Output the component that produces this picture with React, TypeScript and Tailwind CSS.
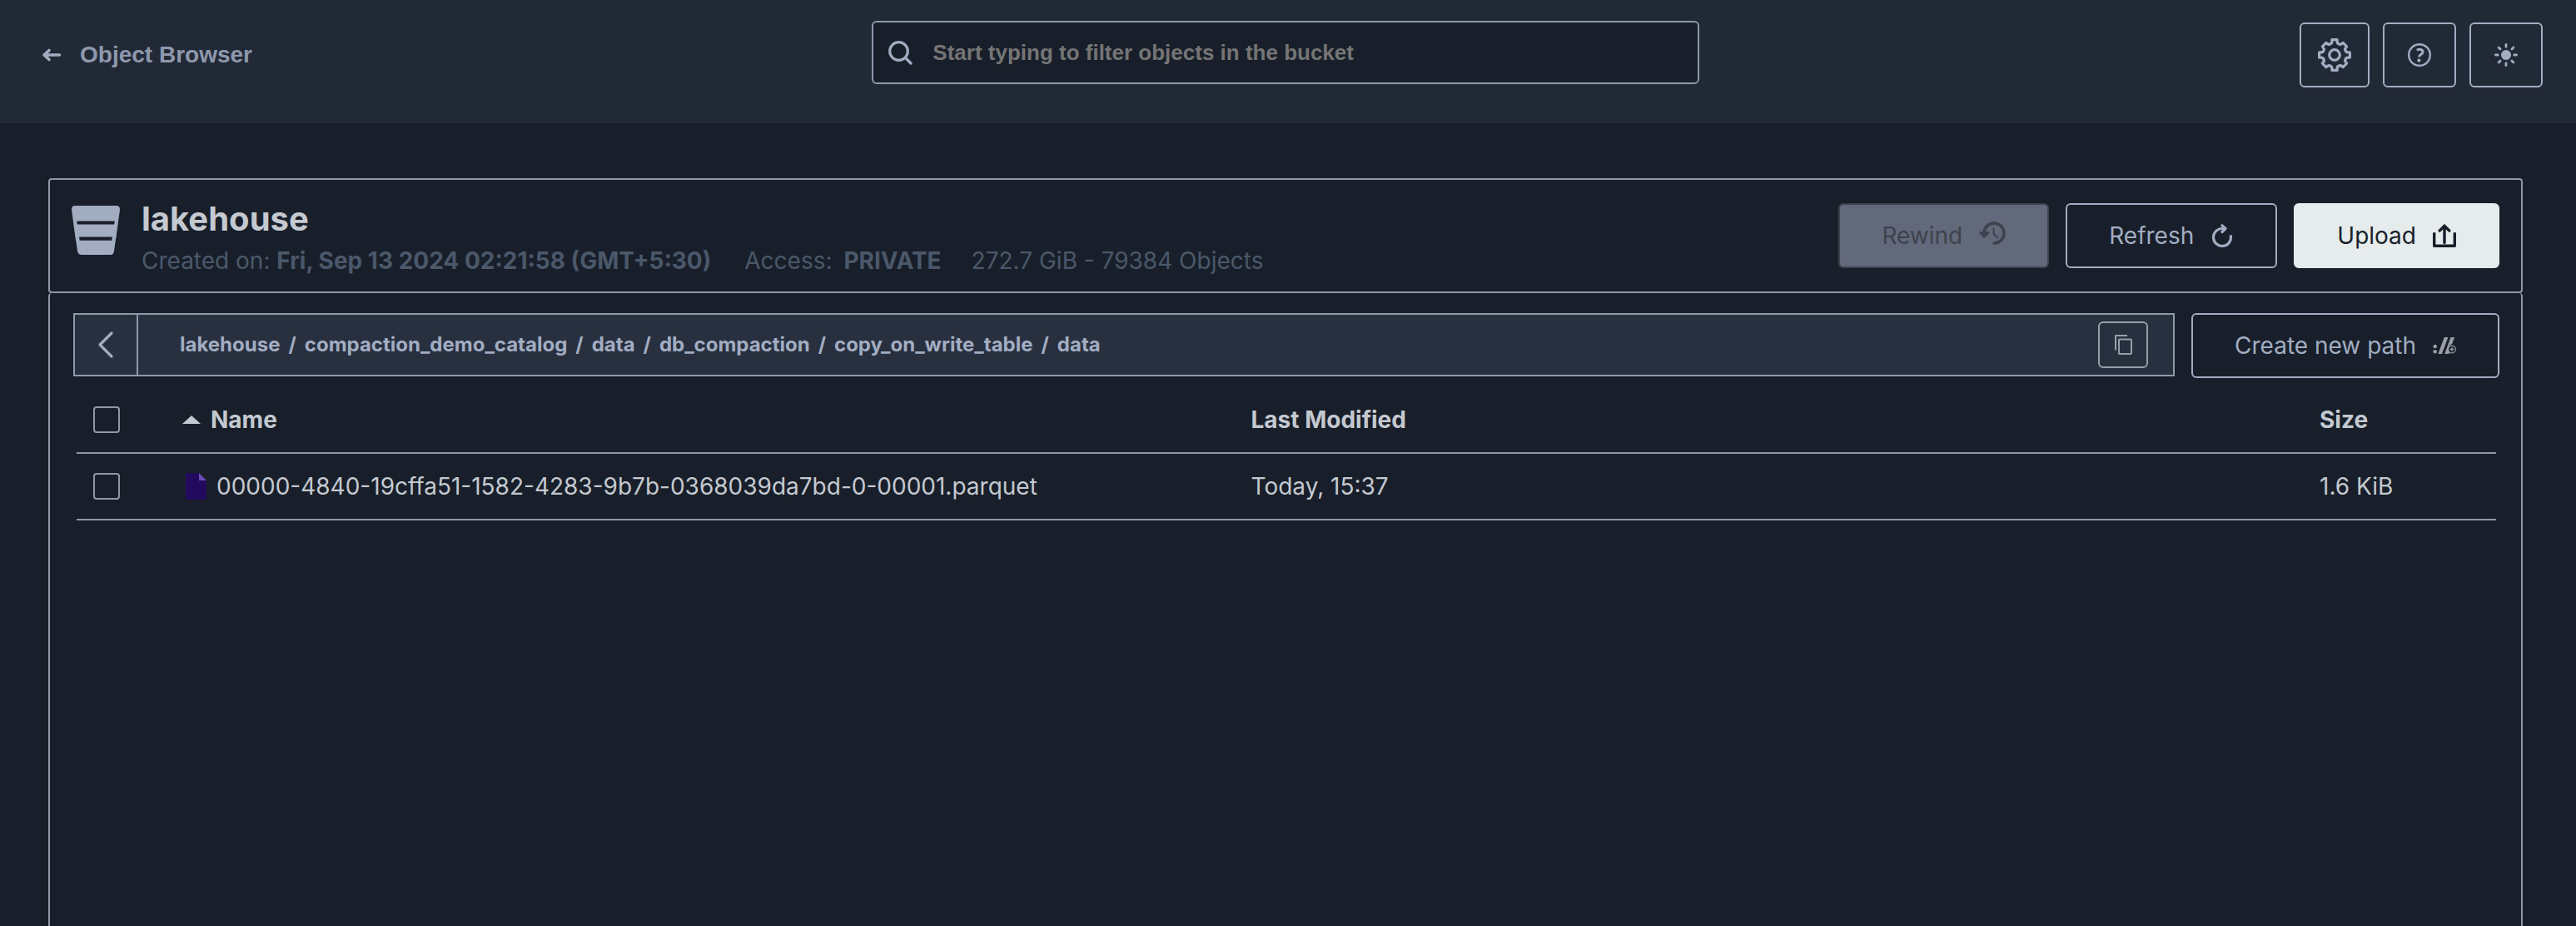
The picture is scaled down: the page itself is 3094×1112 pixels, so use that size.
import type { ButtonHTMLAttributes, ReactNode } from "react";

const crumbs = [
  "lakehouse",
  "compaction_demo_catalog",
  "data",
  "db_compaction",
  "copy_on_write_table",
  "data",
];

const objects = [
  {
    name: "00000-4840-19cffa51-1582-4283-9b7b-0368039da7bd-0-00001.parquet",
    modified: "Today, 15:37",
    size: "1.6 KiB",
  },
];

export default function App() {
  return (
    <div className="flex min-h-screen flex-col bg-[#181f2a] font-['Inter',sans-serif] text-[28px] leading-9 text-[#c4c9d0]">
      <Header />
      <main className="mt-[66px] mr-16 ml-[58px] flex flex-1 flex-col">
        <BucketSummary />
        <section className="flex-1 rounded-t border-x-2 border-[#8e98a9] pt-6 pr-[26px] pl-7">
          <div className="flex items-start gap-5">
            <PathBar />
            <ActionButton icon={<NewPathIcon />}>Create new path</ActionButton>
          </div>
          <ObjectTable />
        </section>
      </main>
    </div>
  );
}

function Header() {
  return (
    <header className="grid h-[148px] grid-cols-3 items-center gap-5 bg-[#222936] pr-10 pb-4 pl-[34px] font-['Liberation_Sans',sans-serif]">
      <div className="flex items-center pl-4">
        <button aria-label="Back" className="text-[#a2adc2]">
          <BackArrowIcon />
        </button>
        <h1 className="ml-[22px] font-bold text-[#8e98ad]">Object Browser</h1>
      </div>

      <div className="mb-1.5 flex h-[76px] items-center rounded-md border-2 border-[#8e98ad] bg-[#181f2a] pl-[18px]">
        <SearchIcon />
        <input
          type="text"
          aria-label="Filter objects"
          placeholder="Start typing to filter objects in the bucket"
          className="ml-6 h-full flex-1 bg-transparent text-[26px] font-bold text-[#c4c9d0] outline-none placeholder:text-[#757575]"
        />
      </div>

      <div className="flex justify-end gap-4">
        <IconButton label="Settings" className="w-[84px]">
          <GearIcon />
        </IconButton>
        <IconButton label="Help" className="w-[88px]">
          <HelpIcon />
        </IconButton>
        <IconButton label="Toggle theme" className="w-[88px]">
          <SunIcon />
        </IconButton>
      </div>
    </header>
  );
}

function IconButton({
  label,
  className,
  children,
}: {
  label: string;
  className: string;
  children: ReactNode;
}) {
  return (
    <button
      aria-label={label}
      className={`flex h-[78px] items-center justify-center rounded-md border-2 border-[#a2adc2] text-[#a2adc2] ${className}`}
    >
      {children}
    </button>
  );
}

const tones = {
  outline: "border-[#a2adc2] text-[#a2adc2]",
  solid: "border-[#e6ebeb] bg-[#e6ebeb] text-[#181f2a]",
  disabled: "border-[#3c434d] bg-[#62697b] text-[#3c434d]",
};

function ActionButton({
  icon,
  tone = "outline",
  children,
  ...rest
}: {
  icon: ReactNode;
  tone?: keyof typeof tones;
} & ButtonHTMLAttributes<HTMLButtonElement>) {
  return (
    <button
      className={`flex h-[78px] shrink-0 items-center gap-5 rounded-md border-2 px-[50px] ${tones[tone]}`}
      {...rest}
    >
      {children}
      {icon}
    </button>
  );
}

function BucketSummary() {
  return (
    <section className="flex h-[138px] items-center justify-between rounded border-2 border-[#8e98a9] px-[26px]">
      <div className="flex items-start pt-1">
        <BucketIcon />
        <div className="ml-[26px]">
          <h2 className="text-[40px] leading-[48px] font-bold">lakehouse</h2>
          <p className="mt-2 flex text-[#4b586a]">
            <span>
              Created on: <b className="font-bold">Fri, Sep 13 2024 02:21:58 (GMT+5:30)</b>
            </span>
            <span className="ml-10">
              Access: <b className="ml-1.5 font-bold">PRIVATE</b>
            </span>
            <span className="ml-9">272.7 GiB - 79384 Objects</span>
          </p>
        </div>
      </div>
      <div className="flex gap-5">
        <ActionButton tone="disabled" icon={<RewindIcon />} disabled>
          Rewind
        </ActionButton>
        <ActionButton icon={<RefreshIcon />}>Refresh</ActionButton>
        <ActionButton tone="solid" icon={<UploadIcon />}>
          Upload
        </ActionButton>
      </div>
    </section>
  );
}

function PathBar() {
  return (
    <div className="flex h-[76px] flex-1 items-center border-2 border-[#8e98a9] bg-[#28303f] pr-[30px] text-[#a2adc2]">
      <button
        aria-label="Up one level"
        className="flex h-full w-[76px] items-center justify-center border-r-2 border-[#8e98a9]"
      >
        <ChevronIcon />
      </button>
      <nav aria-label="Path" className="ml-[50px] flex flex-1 gap-2.5 text-2xl font-bold">
        {crumbs.map((crumb, i) => (
          <span key={i} className="flex gap-2.5">
            {i > 0 && <span>/</span>}
            <a href="#">{crumb}</a>
          </span>
        ))}
      </nav>
      <button
        aria-label="Copy path"
        className="flex h-14 w-[60px] items-center justify-center rounded-md border-2 border-[#949fa9] text-[#949fa9]"
      >
        <CopyIcon />
      </button>
    </div>
  );
}

function ObjectTable() {
  return (
    <div className="mt-2.5 px-1">
      <table className="w-full table-fixed text-left">
        <colgroup>
          <col className="w-[127px]" />
          <col />
          <col />
          <col className="w-[212px]" />
        </colgroup>
        <thead>
          <tr className="h-20 border-b-2 border-[#8e98a9]">
            <th className="pl-5">
              <Checkbox label="Select all" />
            </th>
            <th className="font-bold">
              <span className="flex items-center gap-3">
                <svg width="22" height="10" viewBox="0 0 22 10" fill="currentColor">
                  <path d="M11 0 22 10H0z" />
                </svg>
                Name
              </span>
            </th>
            <th className="font-bold">Last Modified</th>
            <th className="font-bold">Size</th>
          </tr>
        </thead>
        <tbody>
          {objects.map((o) => (
            <tr key={o.name} className="h-20 border-b-2 border-[#8e98a9]">
              <td className="pl-5">
                <Checkbox label={`Select ${o.name}`} />
              </td>
              <td>
                <span className="flex items-center gap-3 pl-1">
                  <FileIcon />
                  {o.name}
                </span>
              </td>
              <td>{o.modified}</td>
              <td>{o.size}</td>
            </tr>
          ))}
        </tbody>
      </table>
    </div>
  );
}

function Checkbox({ label }: { label: string }) {
  return (
    <input
      type="checkbox"
      aria-label={label}
      className="block size-8 appearance-none rounded border-2 border-[#8e98a9] checked:bg-[#8e98a9]"
    />
  );
}

/* Icons */

function BackArrowIcon() {
  return (
    <svg width="24" height="20" viewBox="0 0 24 20" fill="none" stroke="currentColor" strokeWidth="3.6" strokeLinecap="round" strokeLinejoin="round">
      <path d="M21.5 10H3.5M9 4.5 3 10l6 5.5" />
    </svg>
  );
}

function SearchIcon() {
  return (
    <svg width="29" height="29" viewBox="0 0 29 29" fill="none" stroke="#a2adc2" strokeWidth="3.2" strokeLinecap="round">
      <circle cx="12.5" cy="12.5" r="10.8" />
      <path d="m20.5 20.5 6.5 6.5" />
    </svg>
  );
}

function GearIcon() {
  return (
    <svg width="40" height="40" viewBox="-20 -20 40 40" fill="none" stroke="currentColor" strokeWidth="3.2" strokeLinejoin="round" strokeLinecap="round">
      {[0, 90, 180, 270].map((a) => (
        <path
          key={a}
          transform={`rotate(${a})`}
          d="M-7.2-12.6Q-3.3-12.9-3.1-15.8V-18.4H3.1V-15.8Q3.3-12.9 7.2-12.6L10.2-14.6 14.6-10.2 12.6-7.2"
        />
      ))}
      <circle r="6.3" />
    </svg>
  );
}

function HelpIcon() {
  return (
    <svg width="28" height="28" viewBox="0 0 28 28" fill="none" stroke="currentColor">
      <circle cx="14" cy="14" r="12.8" strokeWidth="2.4" />
      <path d="M10.8 8.2C13.5 6.6 18 7 18 10.4c0 3-4.5 2.8-4.5 6.2" strokeWidth="3" />
      <circle cx="13.4" cy="20.6" r="2.1" fill="currentColor" stroke="none" />
    </svg>
  );
}

function SunIcon() {
  return (
    <svg width="28" height="28" viewBox="-14 -14 28 28" stroke="currentColor" strokeWidth="2.8" strokeLinecap="round">
      <circle r="6" fill="currentColor" stroke="none" />
      {[0, 45, 90, 135, 180, 225, 270, 315].map((a) => (
        <path key={a} transform={`rotate(${a})`} d="M0-12.6V-9.8" />
      ))}
    </svg>
  );
}

function BucketIcon() {
  return (
    <svg width="58" height="59" viewBox="0 0 58 59" className="mt-2">
      <path
        fill="#a2adc2"
        d="M4 0h50q4 0 4 5l-1.9 13.5H1.9L0 5Q0 0 4 0zM2.4 22.6h53.2l-2 14.9H4.4zM5.2 41.8h47.6l-1.9 13.2q-.7 4-4 4H12.1q-4 0-5-4z"
      />
      <path fill="#a2adc2" d="M1.9 18h4.2l.8 5h-4.4zM51.9 18h4.2l-.6 5h-4.4zM4.4 37h4.6l.7 5H5.1zM49 37h4.6l-.8 5h-4.5z" />
    </svg>
  );
}

function RewindIcon() {
  return (
    <svg width="32" height="28" viewBox="0 0 32 28" fill="none" stroke="currentColor" strokeLinecap="round" strokeLinejoin="round" className="mb-1.5">
      <path d="M6 15C5.8 7 11.5 2 18 2s12 5.3 12 12-5.3 12-11.8 12" strokeWidth="3.6" />
      <path d="m2 13.5 4.2 4.4 4.6-4.4-4.6.5z" fill="currentColor" strokeWidth="3.2" />
      <path d="M17.6 8v6.8l4.6 4.6" strokeWidth="2" />
    </svg>
  );
}

function RefreshIcon() {
  return (
    <svg width="28" height="28" viewBox="0 0 28 28" fill="none" stroke="currentColor" strokeWidth="3.2" strokeLinecap="round" strokeLinejoin="round">
      <path d="M24.4 14.5A10.5 10.5 0 1 1 13.5 5.5H17" />
      <path d="m14 1.8 4 3.7-4 4" />
    </svg>
  );
}

function UploadIcon() {
  return (
    <svg width="28" height="28" viewBox="0 0 28 28" fill="none" stroke="currentColor" strokeWidth="3.4">
      <path d="M1.7 10.2V26.3H26.3V10.2" strokeLinejoin="round" />
      <path d="M14 22.5V3M8.2 8 14 2.3 19.8 8" strokeLinecap="round" />
    </svg>
  );
}

function NewPathIcon() {
  return (
    <svg width="28" height="20" viewBox="0 0 28 20" fill="#9a9da3">
      <circle cx="2.7" cy="11" r="2.3" />
      <circle cx="2.7" cy="17.3" r="2.3" />
      <path d="M13.8 0h4.6L11 20H6.4zM21.5 0h4.6l-3 8q-4.3 1.8-4.3 6 0 3 2 5.2L18 20h-3.8z" />
      <circle cx="23" cy="14.5" r="4.4" fill="none" stroke="#9a9da3" strokeWidth="1.2" />
      <path d="M23 12.3v4.4M20.8 14.5h4.4" stroke="#9a9da3" strokeWidth="1.5" />
    </svg>
  );
}

function ChevronIcon() {
  return (
    <svg width="20" height="34" viewBox="0 0 20 34" fill="none" stroke="currentColor" strokeWidth="3.2" strokeLinecap="round" strokeLinejoin="round">
      <path d="M17 3 3 17l14 14" />
    </svg>
  );
}

function CopyIcon() {
  return (
    <svg width="21" height="24" viewBox="0 0 21 24" fill="none" stroke="currentColor" strokeWidth="2" strokeLinejoin="round">
      <path d="M1 18.5V1h14" />
      <rect x="5" y="5.5" width="15" height="17.5" rx="1" />
    </svg>
  );
}

function FileIcon() {
  return (
    <svg width="25" height="32" viewBox="0 0 25 32">
      <path fill="#220a5e" d="M1.5 0H16v9h9v21.5q0 1.5-1.5 1.5h-22Q0 32 0 30.5v-29Q0 0 1.5 0z" />
      <path fill="#6a4bb5" d="m16 0 9 9h-9z" />
    </svg>
  );
}
